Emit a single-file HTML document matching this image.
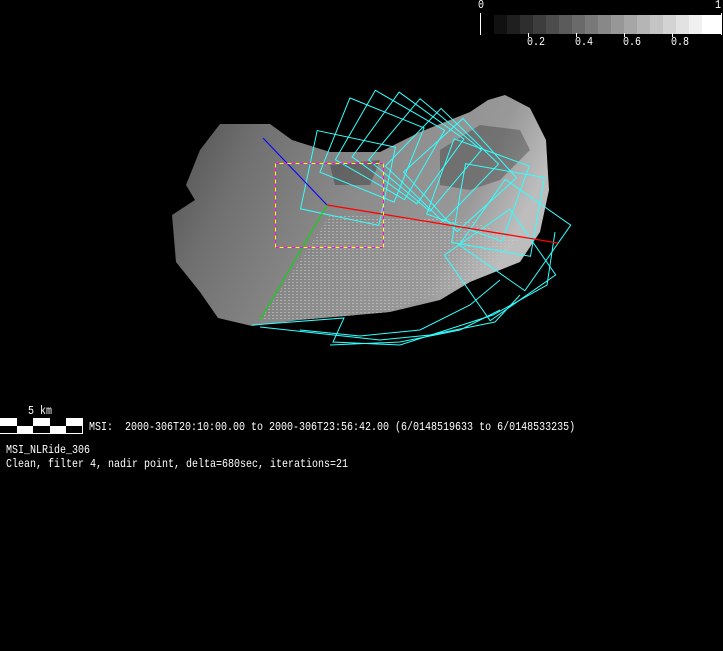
<!DOCTYPE html>
<html><head><meta charset="utf-8"><style>
html,body{margin:0;padding:0;background:#000;width:723px;height:651px;overflow:hidden}
.t{position:absolute;color:#fff;font:10px "Liberation Mono",monospace;white-space:pre;line-height:12px;transform:scaleY(1.15);transform-origin:0 0}
</style></head><body>
<svg width="723" height="651" style="position:absolute;left:0;top:0">
<defs>
<linearGradient id="g" x1="0" y1="0" x2="1" y2="0.3">
<stop offset="0" stop-color="#4a4a4a"/><stop offset="0.25" stop-color="#707070"/>
<stop offset="0.55" stop-color="#8a8a8a"/><stop offset="0.85" stop-color="#999"/><stop offset="1" stop-color="#bdbdbd"/>
</linearGradient>
<pattern id="p" width="4" height="3" patternUnits="userSpaceOnUse"><rect width="2" height="1" fill="#c8c8c8"/></pattern>
</defs>
<g>
<rect x="494" y="15" width="14" height="19" fill="#111"/><rect x="507" y="15" width="14" height="19" fill="#1f1f1f"/>
<rect x="520" y="15" width="14" height="19" fill="#2e2e2e"/><rect x="533" y="15" width="14" height="19" fill="#3d3d3d"/>
<rect x="546" y="15" width="14" height="19" fill="#4c4c4c"/><rect x="559" y="15" width="14" height="19" fill="#5b5b5b"/>
<rect x="572" y="15" width="14" height="19" fill="#6a6a6a"/><rect x="585" y="15" width="14" height="19" fill="#797979"/>
<rect x="598" y="15" width="14" height="19" fill="#888"/><rect x="611" y="15" width="14" height="19" fill="#979797"/>
<rect x="624" y="15" width="14" height="19" fill="#a6a6a6"/><rect x="637" y="15" width="14" height="19" fill="#b5b5b5"/>
<rect x="650" y="15" width="14" height="19" fill="#c4c4c4"/><rect x="663" y="15" width="14" height="19" fill="#d3d3d3"/>
<rect x="676" y="15" width="14" height="19" fill="#e2e2e2"/><rect x="689" y="15" width="14" height="19" fill="#f0f0f0"/>
<rect x="702" y="15" width="20" height="19" fill="#fff"/>
<line x1="480.5" y1="13" x2="480.5" y2="35" stroke="#fff"/>
<line x1="528.5" y1="33" x2="528.5" y2="37" stroke="#fff"/><line x1="576.5" y1="33" x2="576.5" y2="37" stroke="#fff"/>
<line x1="624.5" y1="33" x2="624.5" y2="37" stroke="#fff"/><line x1="672.5" y1="33" x2="672.5" y2="37" stroke="#fff"/>
<line x1="721.5" y1="13" x2="721.5" y2="35" stroke="#fff"/>
</g>
<path d="M195,200 L172,215 L176,262 L200,292 L218,318 L252,326 L300,320 L390,312 L440,300 L470,282 L520,262 L540,232 L549,190 L546,140 L530,108 L505,95 L488,100 L470,112 L420,132 L380,152 L330,152 L292,140 L270,124 L220,124 L200,150 L186,185 Z" fill="url(#g)"/>
<path d="M330,215 L470,220 L520,240 L470,282 L390,312 L300,320 L260,320 Z" fill="url(#p)" opacity="0.6"/>
<path d="M440,150 L480,125 L520,130 L530,150 L500,180 L470,190 L440,185 Z" fill="#2a2a2a" opacity="0.35"/>
<path d="M330,165 L380,160 L370,185 L335,185 Z" fill="#222" opacity="0.35"/>
<g fill="none" stroke="#3ff" stroke-width="1">
<rect x="-40" y="-40" width="80" height="80" transform="translate(348,178) rotate(12)"/>
<rect x="-40" y="-40" width="80" height="80" transform="translate(372,150) rotate(22)"/>
<rect x="-40" y="-40" width="80" height="80" transform="translate(390,145) rotate(30)"/>
<rect x="-40" y="-40" width="80" height="80" transform="translate(408,148) rotate(36)"/>
<rect x="-40" y="-40" width="80" height="80" transform="translate(425,155) rotate(40)"/>
<rect x="-40" y="-40" width="80" height="80" transform="translate(442,165) rotate(44)"/>
<rect x="-40" y="-40" width="80" height="80" transform="translate(460,175) rotate(48)"/>
<rect x="-40" y="-40" width="80" height="80" transform="translate(478,190) rotate(20)"/>
<rect x="-40" y="-40" width="80" height="80" transform="translate(498,210) rotate(10)"/>
<rect x="-40" y="-40" width="80" height="80" transform="translate(515,235) rotate(35)"/>
<rect x="-40" y="-40" width="80" height="80" transform="translate(500,265) rotate(55)"/>
<polyline points="252,325 344,318 333,342 400,345 493,315 547,285 555,232"/>
<polyline points="260,327 380,340 430,335 495,322 520,295"/>
<polyline points="300,330 360,336 420,330 470,305 500,280"/>
<polyline points="330,345 400,342 460,330 500,310"/>
</g>
<line x1="263" y1="138" x2="327" y2="205" stroke="#00f"/>
<line x1="327" y1="205" x2="558" y2="243" stroke="#f00" stroke-width="1.3"/>
<line x1="327" y1="205" x2="260" y2="320" stroke="#0d0"/>
<rect x="275.5" y="163.5" width="108" height="84" fill="none" stroke="#f0f" stroke-dasharray="4,4"/>
<rect x="275.5" y="163.5" width="108" height="84" fill="none" stroke="#ff0" stroke-dasharray="4,4" stroke-dashoffset="4"/>
<rect x="0" y="418" width="83" height="16" fill="#fff"/>
<rect x="17" y="418" width="16" height="8" fill="#000"/><rect x="50" y="418" width="16" height="8" fill="#000"/>
<rect x="0" y="426" width="17" height="7" fill="#000"/><rect x="33" y="426" width="17" height="7" fill="#000"/><rect x="66" y="426" width="16" height="7" fill="#000"/>
</svg>
<div class="t" style="left:478px;top:0px">0</div>
<div class="t" style="left:715px;top:0px">1</div>
<div class="t" style="left:527px;top:37px">0.2</div>
<div class="t" style="left:575px;top:37px">0.4</div>
<div class="t" style="left:623px;top:37px">0.6</div>
<div class="t" style="left:671px;top:37px">0.8</div>
<div class="t" style="left:28px;top:406px">5 km</div>
<div class="t" style="left:89px;top:422px">MSI:  2000-306T20:10:00.00 to 2000-306T23:56:42.00 (6/0148519633 to 6/0148533235)</div>
<div class="t" style="left:6px;top:445px">MSI_NLRide_306</div>
<div class="t" style="left:6px;top:459px">Clean, filter 4, nadir point, delta=680sec, iterations=21</div>
</body></html>
